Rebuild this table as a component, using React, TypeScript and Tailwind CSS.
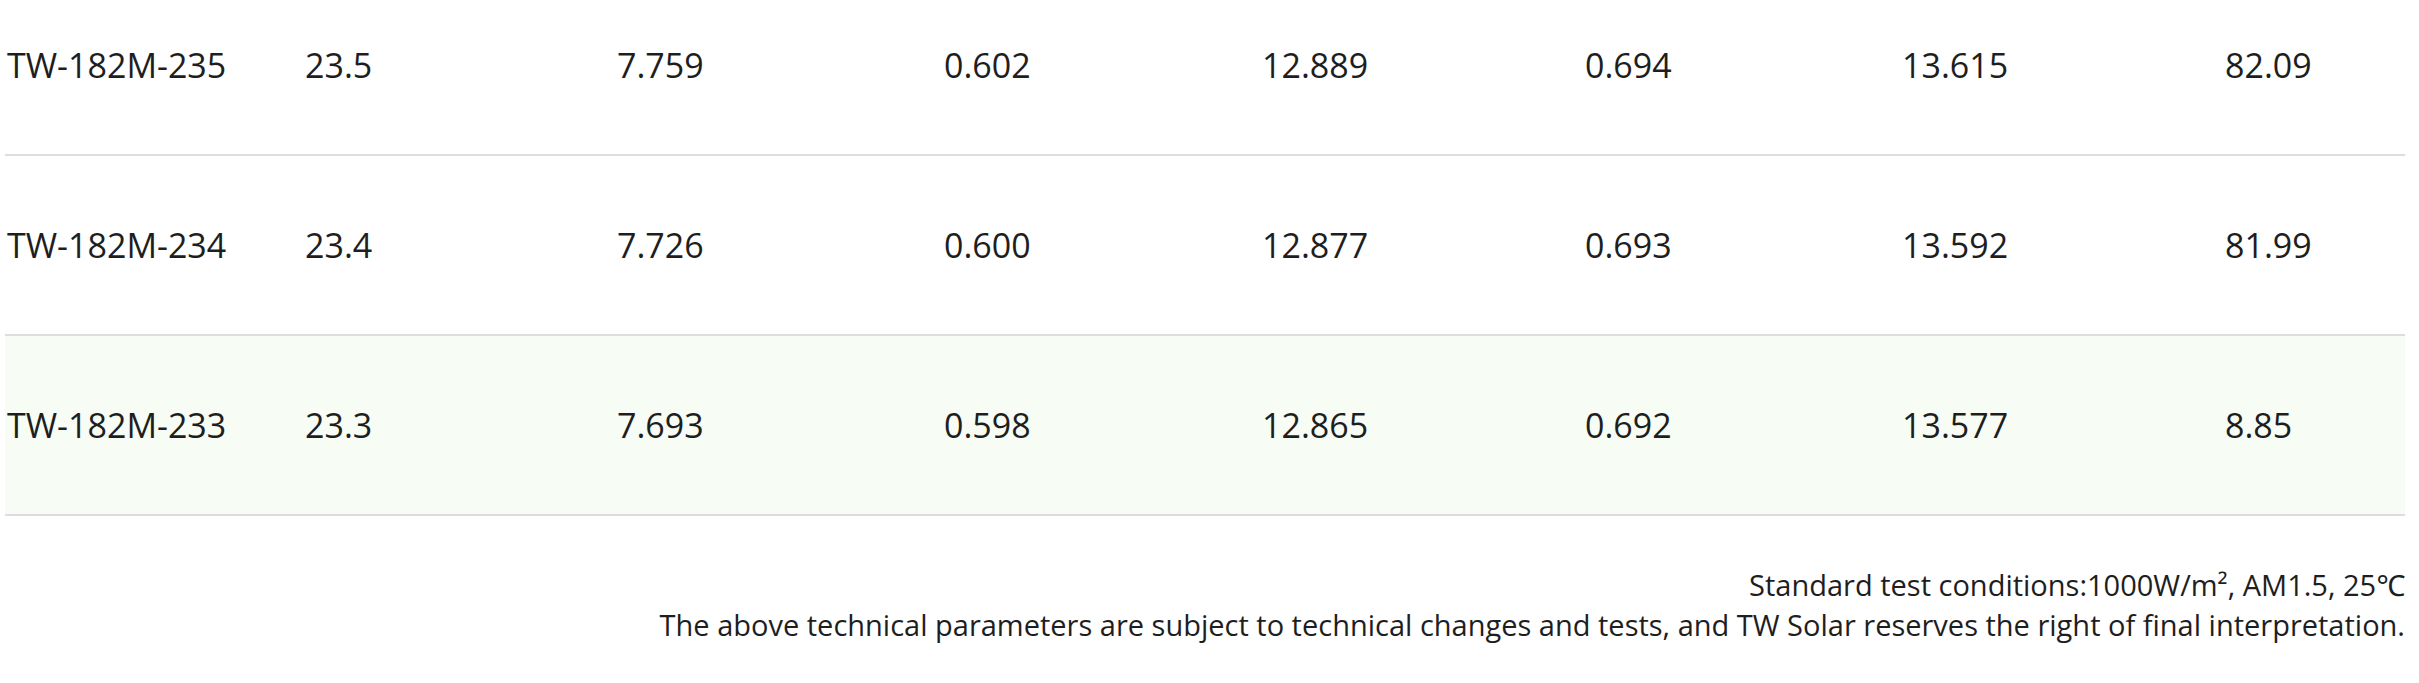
const rows = [
  { model: 'TW-182M-235', v: ['23.5', '7.759', '0.602', '12.889', '0.694', '13.615', '82.09'], active: false },
  { model: 'TW-182M-234', v: ['23.4', '7.726', '0.600', '12.877', '0.693', '13.592', '81.99'], active: false },
  { model: 'TW-182M-233', v: ['23.3', '7.693', '0.598', '12.865', '0.692', '13.577', '8.85'], active: true },
]

export default function App() {
  return (
    <div className="min-h-screen bg-white text-[#1e1e1e] overflow-hidden" style={{ fontFamily: '"Open Sans", "Noto Sans", sans-serif' }}>
      <div className="w-[2400px] ml-[5px] -mt-[24px]">
        {rows.map(r => (
          <div key={r.model}
            className={`grid grid-cols-[298px_312px_327px_318px_323px_317px_323px_1fr] h-[180px] items-center border-b-2 border-[#dddddd] text-[34px] ${r.active ? 'bg-[#f7fcf5]' : ''}`}>
            <div className="pl-[2px]">{r.model}</div>
            {r.v.map((x, i) => (
              <div key={i} className="pl-[2px]">{x}</div>
            ))}
          </div>
        ))}
        <div className="pt-[49px] text-right text-[29px] leading-[40px]">
          <p>Standard test conditions:1000W/m², AM1.5, 25℃</p>
          <p>The above technical parameters are subject to technical changes and tests, and TW Solar reserves the right of final interpretation.</p>
        </div>
      </div>
    </div>
  )
}
